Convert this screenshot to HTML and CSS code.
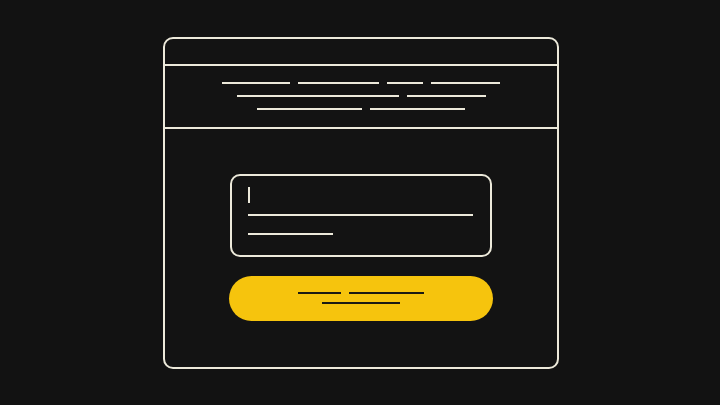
FILE: index.html
```html
<!DOCTYPE html>
<html>
<head>
<meta charset="utf-8">
<link rel="stylesheet" href="styles.css">
</head>
<body>
<div class="frame">
  <div class="titlebar"></div>
  <div class="header">
    <div class="row">
      <span class="ln" style="width:68px"></span>
      <span class="ln" style="width:81px"></span>
      <span class="ln" style="width:36px"></span>
      <span class="ln" style="width:69px"></span>
    </div>
    <div class="row">
      <span class="ln" style="width:162px"></span>
      <span class="ln" style="width:79px"></span>
    </div>
    <div class="row">
      <span class="ln" style="width:105px"></span>
      <span class="ln" style="width:95px"></span>
    </div>
  </div>
  <div class="main">
    <div class="input">
      <span class="cursor"></span>
      <span class="ln line1"></span>
      <span class="ln line2"></span>
    </div>
    <div class="button">
      <div class="row">
        <span class="ln dark" style="width:43px"></span>
        <span class="ln dark" style="width:75px"></span>
      </div>
      <div class="row">
        <span class="ln dark" style="width:78px"></span>
      </div>
    </div>
  </div>
</div>
</body>
</html>
```
FILE: styles.css
```css
html, body {
  margin: 0;
  padding: 0;
  background: #121212;
  width: 720px;
  height: 405px;
  overflow: hidden;
}
.frame {
  box-sizing: border-box;
  margin: 37px 0 0 163px;
  width: 396px;
  height: 332px;
  border: 2px solid #ece9da;
  border-radius: 10px;
  background: #131313;
  display: flex;
  flex-direction: column;
}
.titlebar {
  height: 25px;
  border-bottom: 2px solid #ece9da;
}
.header {
  height: 63px;
  box-sizing: border-box;
  padding-top: 16px;
  border-bottom: 2px solid #ece9da;
  display: flex;
  flex-direction: column;
  gap: 11px;
}
.row {
  display: flex;
  justify-content: center;
  gap: 8px;
  height: 2px;
}
.ln {
  display: block;
  height: 2px;
  background: #ece9da;
}
.ln.dark {
  background: #1a1a14;
}
.main {
  display: flex;
  flex-direction: column;
  align-items: center;
  padding-top: 45px;
}
.input {
  box-sizing: border-box;
  width: 262px;
  height: 83px;
  border: 2px solid #ece9da;
  border-radius: 10px;
  padding: 11px 16px 0 16px;
  display: flex;
  flex-direction: column;
}
.cursor {
  display: block;
  width: 2px;
  height: 16px;
  background: #ece9da;
}
.line1 {
  width: 225px;
  margin-top: 11px;
}
.line2 {
  width: 85px;
  margin-top: 17px;
}
.button {
  box-sizing: border-box;
  margin-top: 19px;
  width: 264px;
  height: 45px;
  border-radius: 23px;
  background: #f6c40d;
  padding-top: 16px;
  display: flex;
  flex-direction: column;
  gap: 8px;
}
```
